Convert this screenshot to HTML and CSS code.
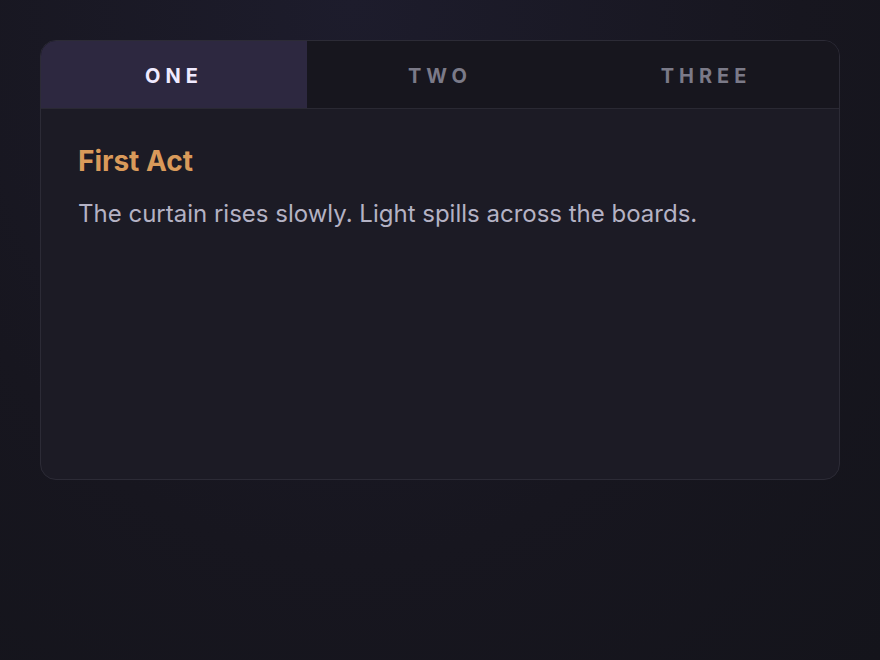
FILE: index.html
```html
<!DOCTYPE html>
<html lang="en">
<head>
  <meta charset="UTF-8">
  <meta name="viewport" content="width=device-width, initial-scale=1.0">
  <title>Acts</title>
  <link rel="stylesheet" href="styles.css">
</head>
<body>
  <div class="card">
    <div class="tabs">
      <div class="tab active">One</div>
      <div class="tab">Two</div>
      <div class="tab">Three</div>
    </div>
    <div class="panel">
      <h2>First Act</h2>
      <p>The curtain rises slowly. Light spills across the boards.</p>
    </div>
  </div>
</body>
</html>
```
FILE: styles.css
```css
html {
  height: 100%;
}
body {
  margin: 0;
  min-height: 100%;
  padding: 40px;
  box-sizing: border-box;
  font-family: Inter, "Noto Sans", sans-serif;
  background: radial-gradient(ellipse at 40% 0%, #1d1c2c 0%, #17161f 60%, #14141b 100%);
}
.card {
  width: 800px;
  height: 440px;
  border: 1px solid #2c2b36;
  border-radius: 16px;
  overflow: hidden;
  background: #1c1b25;
  box-sizing: border-box;
  display: flex;
  flex-direction: column;
}
.tabs {
  display: flex;
  height: 68px;
  background: #17161e;
  border-bottom: 1px solid #2a2933;
  box-sizing: border-box;
}
.tab {
  flex: 1;
  display: flex;
  align-items: center;
  justify-content: center;
  padding-top: 2px;
  text-transform: uppercase;
  font-size: 20px;
  font-weight: 700;
  letter-spacing: 5px;
  color: #7b7a88;
  cursor: pointer;
}
.tab.active {
  background: #2d2840;
  color: #efeaff;
}
.panel {
  padding: 35px 37px;
}
.panel h2 {
  margin: 0 0 21px;
  font-size: 28px;
  font-weight: 700;
  color: #d99a5a;
}
.panel p {
  margin: 0;
  font-size: 24px;
  color: #b4b2c4;
}
```
